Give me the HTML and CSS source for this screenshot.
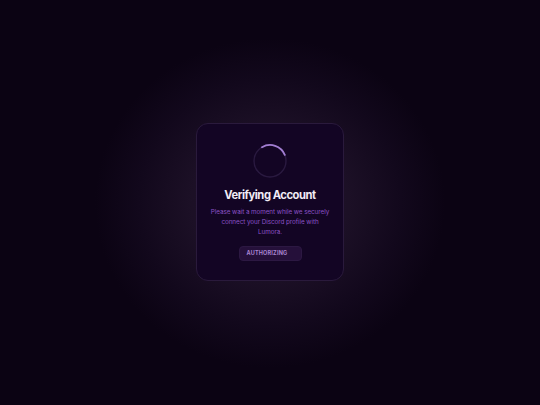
FILE: index.html
```html
<!DOCTYPE html>
<html>
<head>
<meta charset="utf-8">
<link rel="stylesheet" href="styles.css">
</head>
<body>
<div class="page">
  <div class="card">
    <svg class="spinner" width="34" height="34" viewBox="0 0 34 34">
      <circle cx="17" cy="17" r="16" fill="none" stroke="#2a1a40" stroke-width="1.4"/>
      <path d="M 9 3.2 A 16 16 0 0 1 31.8 10.8" fill="none" stroke="#a27ed2" stroke-width="1.8" stroke-linecap="round"/>
    </svg>
    <h1 class="title">Verifying Account</h1>
    <p class="desc">Please wait a moment while we securely connect your Discord profile with Lumora.</p>
    <div class="badge">AUTHORIZING</div>
  </div>
</div>
</body>
</html>
```
FILE: styles.css
```css
html, body {
  margin: 0;
  padding: 0;
  width: 540px;
  height: 405px;
  overflow: hidden;
}
body {
  background: #0b0313;
  font-family: "Inter", "Noto Sans", sans-serif;
}
.page {
  width: 540px;
  height: 405px;
  display: flex;
  align-items: center;
  justify-content: center;
  background: radial-gradient(ellipse 175px 165px at 270px 203px, #21142b 0%, #1c1026 45%, #12081c 75%, #0b0313 100%);
}
.card {
  box-sizing: border-box;
  width: 148px;
  height: 158px;
  margin-bottom: 2px;
  padding: 20px 12px 0;
  border: 1px solid #2a1a3c;
  border-radius: 12px;
  background: #130524;
  display: flex;
  flex-direction: column;
  align-items: center;
}
.spinner {
  display: block;
  width: 34px;
  height: 34px;
}
.title {
  margin: 10px 0 0;
  font-size: 11.2px;
  line-height: 15px;
  font-weight: 700;
  color: #f1ecf6;
  letter-spacing: -0.45px;
  white-space: nowrap;
}
.desc {
  margin: 4px 0 0;
  font-size: 6.3px;
  line-height: 10px;
  color: #8c52c6;
  text-align: center;
  letter-spacing: -0.05px;
}
.badge {
  margin-top: 9px;
  width: 63px;
  height: 15px;
  box-sizing: border-box;
  padding-left: 7px;
  border-radius: 4px;
  background: #25103a;
  border: 1px solid #2c1842;
  color: #a985d2;
  font-size: 5.5px;
  font-weight: 700;
  letter-spacing: 0.2px;
  line-height: 13px;
}
```
